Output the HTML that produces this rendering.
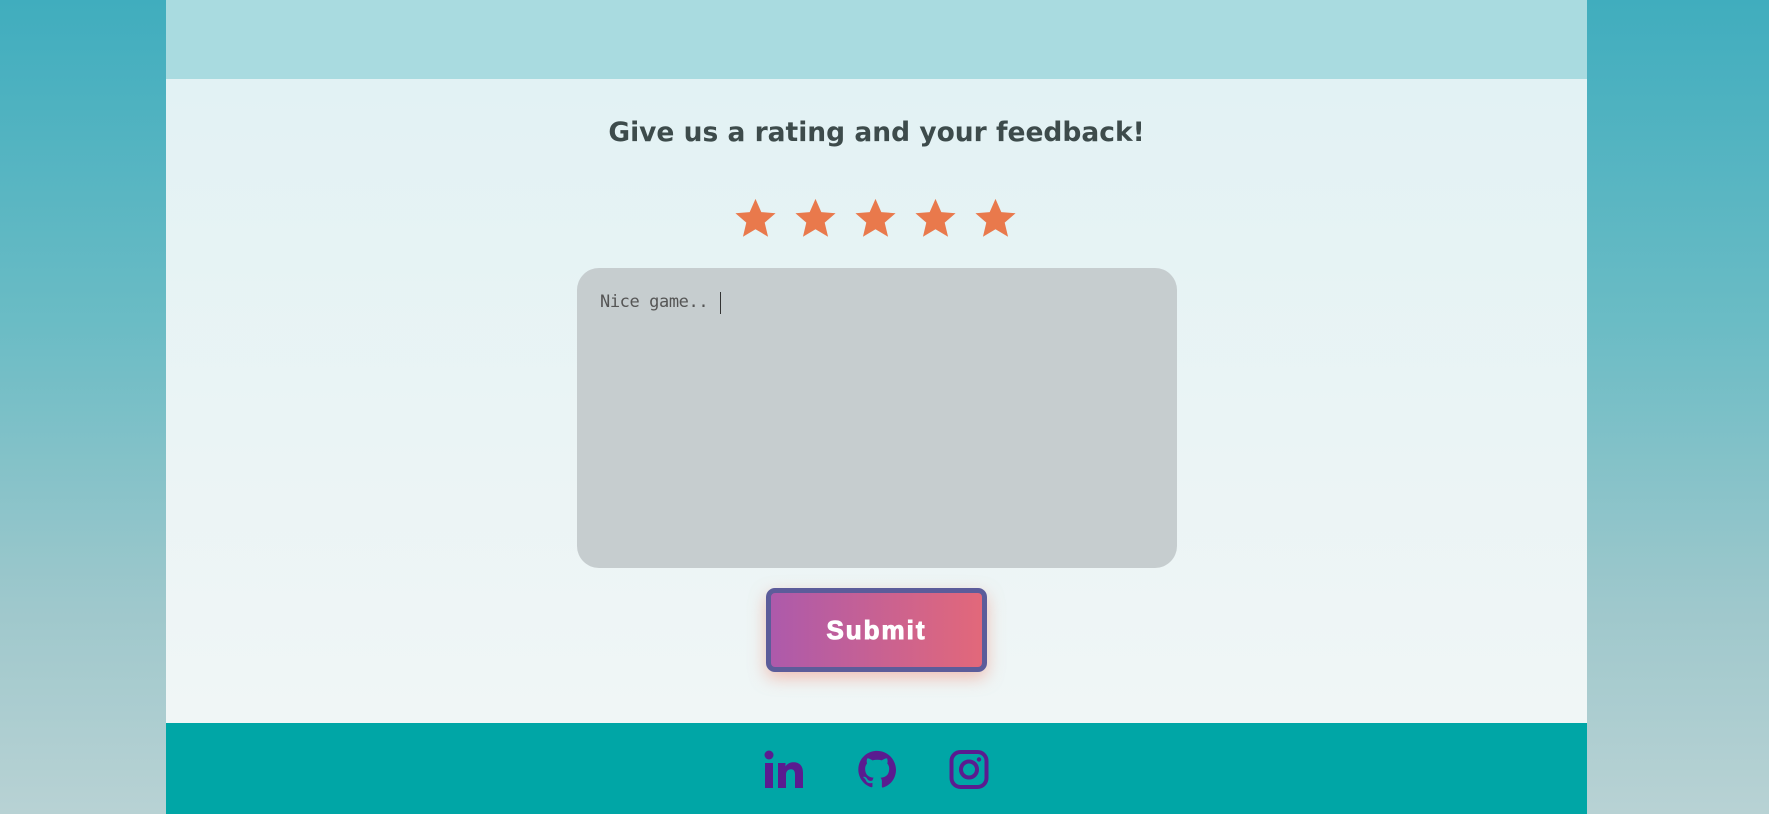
<!DOCTYPE html>
<html><head><meta charset="utf-8"><style>
*{margin:0;padding:0;box-sizing:border-box}
html,body{width:1769px;height:814px;overflow:hidden}
body{background:linear-gradient(180deg,#40adbe 0%,#6bbcc5 40%,#9fc8cc 75%,#b8d2d4 100%);position:relative;font-family:"Liberation Sans",sans-serif}
.top{position:absolute;left:166px;top:0;width:1421px;height:79px;background:#a9dbe0}
.panel{position:absolute;left:166px;top:79px;width:1421px;height:644px;background:linear-gradient(180deg,#e2f2f4 0%,#ebf4f5 60%,#f0f6f6 100%)}
.foot{position:absolute;left:166px;top:723px;width:1421px;height:91px;background:#00a6a6}
h1{position:absolute;left:-8px;width:100%;top:117px;text-align:center;font-family:"DejaVu Sans",sans-serif;font-size:26.5px;font-weight:bold;color:#3d4b4b}
.stars{position:absolute;left:733px;top:196px;display:flex;gap:15px}
.ta{position:absolute;left:577px;top:268px;width:600px;height:300px;border-radius:22px;background:#c6cdcf}
.ta span{position:absolute;left:23px;top:24px;font-family:"DejaVu Sans Mono","Liberation Mono",monospace;font-size:17px;color:#555;letter-spacing:-0.4px}
.ta i{position:absolute;left:143px;top:24px;width:1px;height:22px;background:#333}
.btn{position:absolute;left:766px;top:588px;width:221px;height:84px;border:5px solid #5c5c9a;border-radius:9px;background:linear-gradient(90deg,#ad5aab,#e2687a);box-shadow:0 6px 16px rgba(240,140,120,.5);color:#fff;font-family:"Liberation Sans",sans-serif;font-weight:900;font-size:26px;letter-spacing:2px;text-align:center;line-height:74px;-webkit-text-stroke:1px #fff}
.ic{position:absolute;top:750px}
</style></head><body>
<div class="top"></div><div class="panel"></div><div class="foot"></div>
<h1>Give us a rating and your feedback!</h1>
<div class="stars">
<svg width="45" height="45" viewBox="0 0 24 24"><path fill="#e9794c" d="M12 1.5l3.1 7.1 7.6.6-5.8 5 1.8 7.5L12 17.7l-6.7 4 1.8-7.5-5.8-5 7.6-.6z"/></svg>
<svg width="45" height="45" viewBox="0 0 24 24"><path fill="#e9794c" d="M12 1.5l3.1 7.1 7.6.6-5.8 5 1.8 7.5L12 17.7l-6.7 4 1.8-7.5-5.8-5 7.6-.6z"/></svg>
<svg width="45" height="45" viewBox="0 0 24 24"><path fill="#e9794c" d="M12 1.5l3.1 7.1 7.6.6-5.8 5 1.8 7.5L12 17.7l-6.7 4 1.8-7.5-5.8-5 7.6-.6z"/></svg>
<svg width="45" height="45" viewBox="0 0 24 24"><path fill="#e9794c" d="M12 1.5l3.1 7.1 7.6.6-5.8 5 1.8 7.5L12 17.7l-6.7 4 1.8-7.5-5.8-5 7.6-.6z"/></svg>
<svg width="45" height="45" viewBox="0 0 24 24"><path fill="#e9794c" d="M12 1.5l3.1 7.1 7.6.6-5.8 5 1.8 7.5L12 17.7l-6.7 4 1.8-7.5-5.8-5 7.6-.6z"/></svg>
</div>
<div class="ta"><span>Nice game..</span><i></i></div>
<div class="btn">Submit</div>
<svg class="ic" style="left:764px" width="40" height="39" viewBox="0 0 40 39"><circle cx="5" cy="5" r="4.5" fill="#5a1c90"/><rect x="1" y="13" width="8" height="25" fill="#5a1c90"/><path fill="#5a1c90" d="M14 13h7.5v3.5c1.5-2.5 4.5-4.2 8-4.2 6 0 9.5 3.5 9.5 10.5V38h-8V24.5c0-3.5-1.3-5.3-4-5.3s-5 1.8-5 5.3V38h-8z"/></svg>
<svg class="ic" style="left:857px" width="40" height="39" viewBox="0 0 24 24"><path fill="#5a1c90" d="M12 .5C5.6.5.5 5.6.5 12c0 5.1 3.3 9.4 7.9 10.9.6.1.8-.2.8-.6v-2c-3.2.7-3.9-1.4-3.9-1.4-.5-1.3-1.3-1.7-1.3-1.7-1-.7.1-.7.1-.7 1.2.1 1.8 1.2 1.8 1.2 1 1.8 2.7 1.3 3.4 1 .1-.8.4-1.3.7-1.6-2.6-.3-5.3-1.3-5.3-5.7 0-1.3.5-2.3 1.2-3.1-.1-.3-.5-1.5.1-3.1 0 0 1-.3 3.2 1.2a11 11 0 0 1 5.8 0c2.2-1.5 3.2-1.2 3.2-1.2.6 1.6.2 2.8.1 3.1.7.8 1.2 1.8 1.2 3.1 0 4.4-2.7 5.4-5.3 5.7.4.4.8 1.1.8 2.2v3.2c0 .3.2.7.8.6 4.6-1.5 7.9-5.8 7.9-10.9C23.5 5.6 18.4.5 12 .5z"/></svg>
<svg class="ic" style="left:949px" width="40" height="39" viewBox="0 0 40 39"><rect x="2.5" y="2" width="35" height="35" rx="9" fill="none" stroke="#5a1c90" stroke-width="4"/><circle cx="20" cy="19.5" r="8" fill="none" stroke="#5a1c90" stroke-width="4"/><circle cx="30" cy="9.5" r="2.2" fill="#5a1c90"/></svg>
</body></html>
